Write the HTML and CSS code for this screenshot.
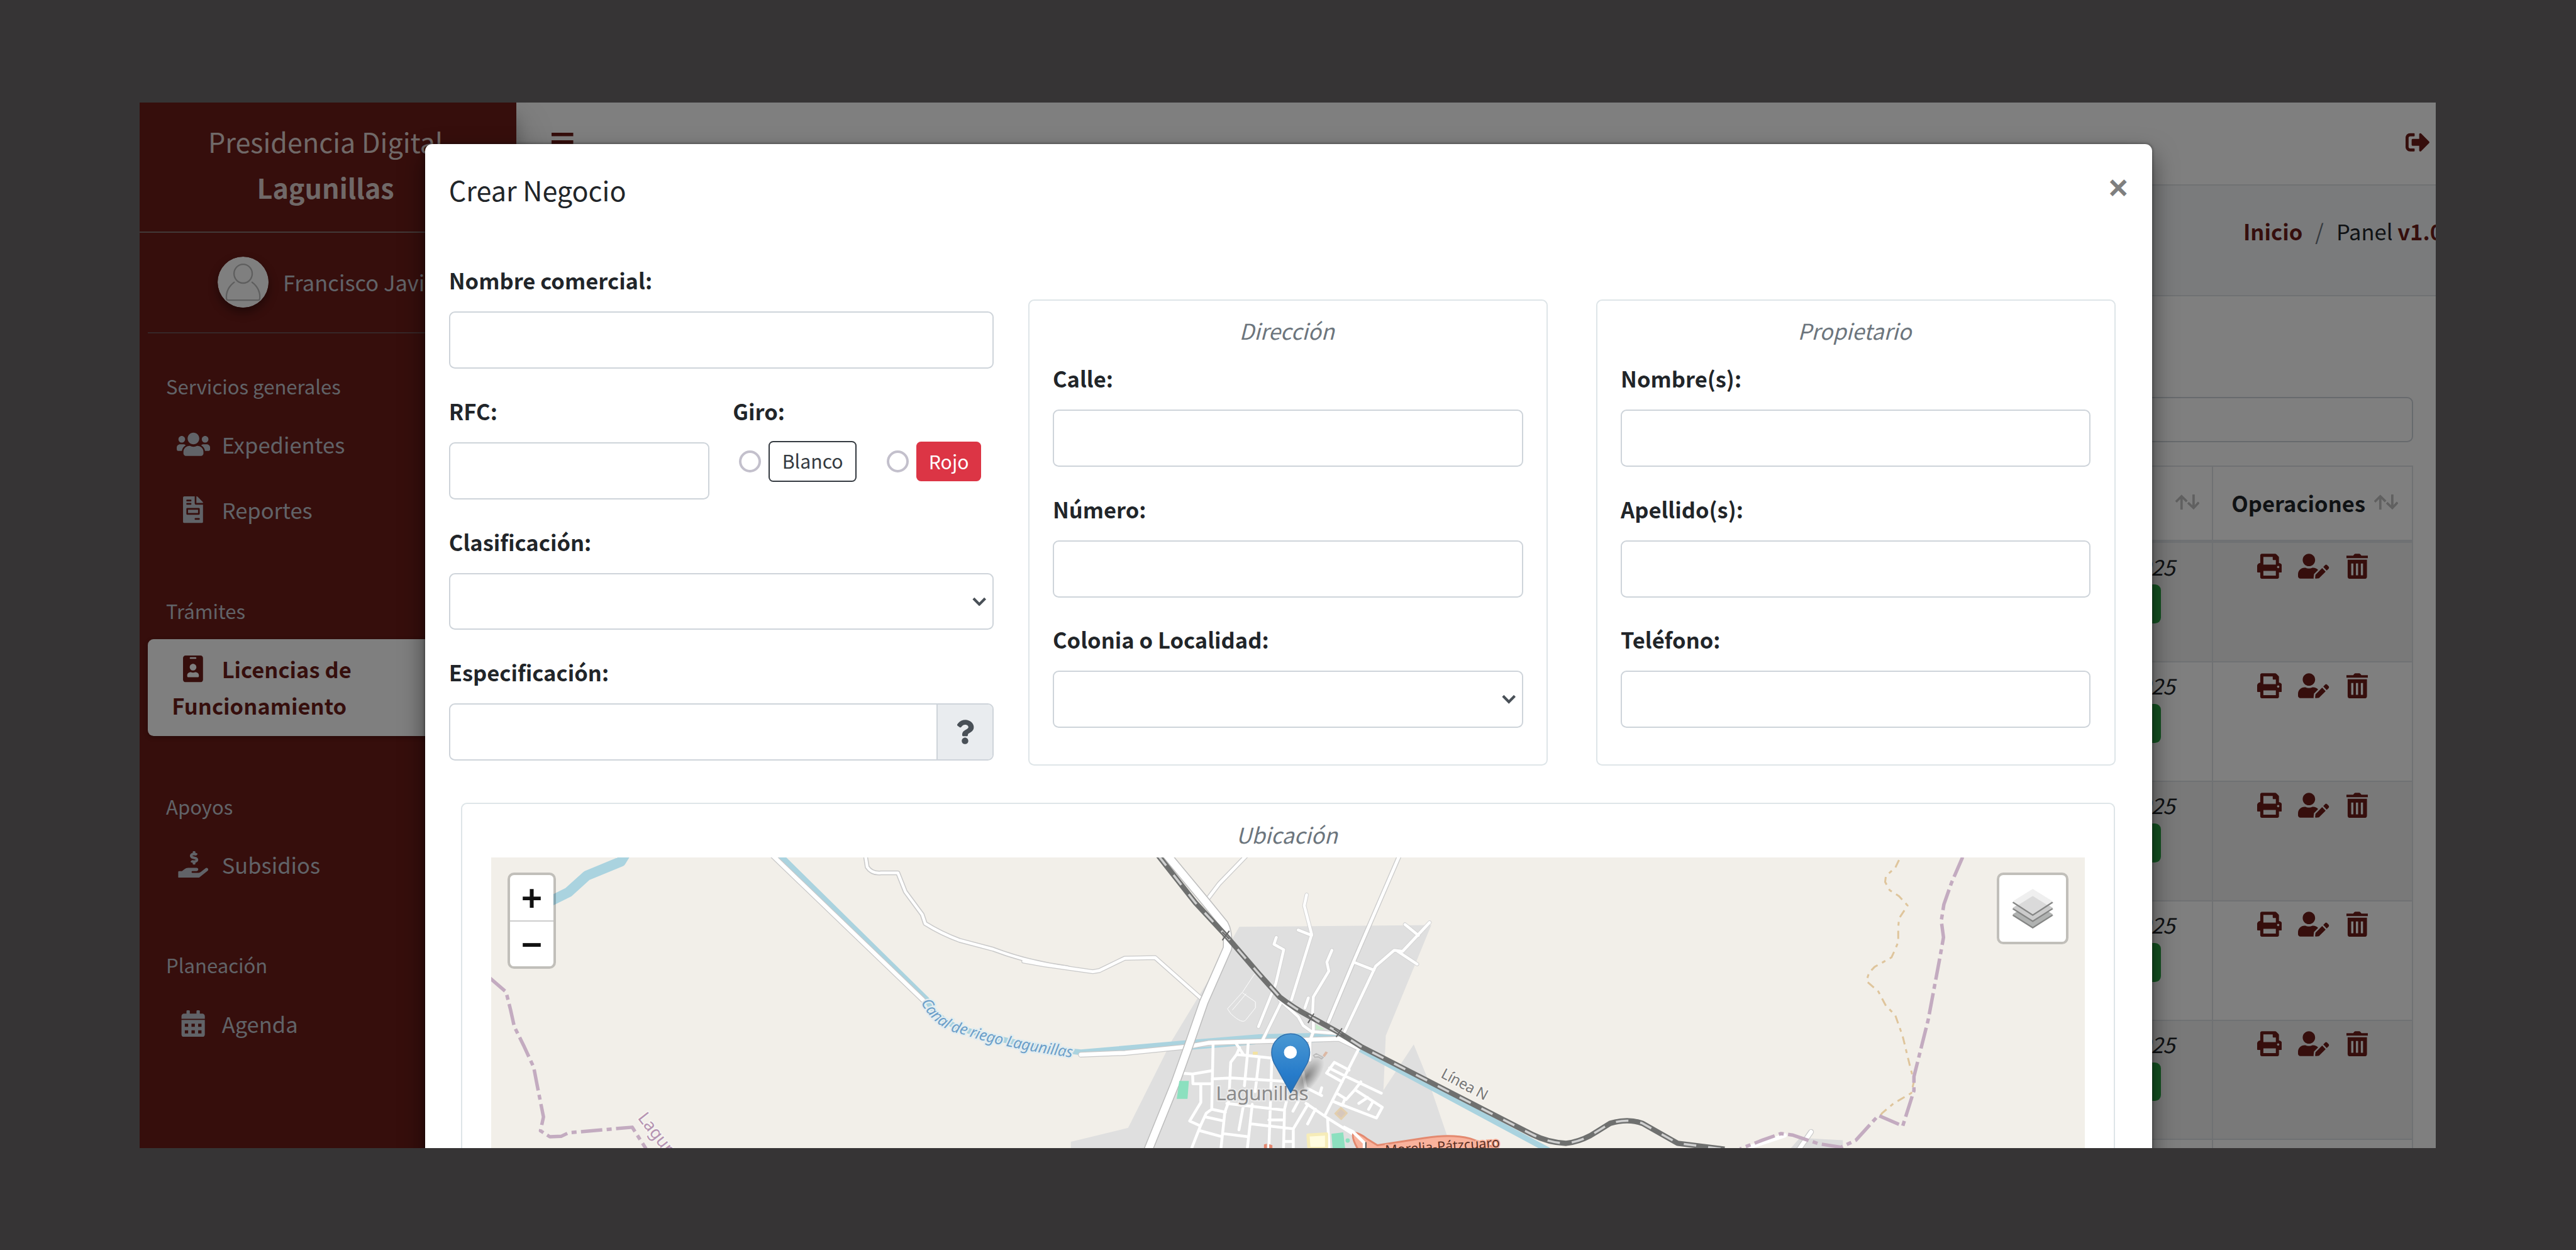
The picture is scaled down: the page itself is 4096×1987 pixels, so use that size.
FILE: index.html
```html
<!DOCTYPE html>
<html lang="es">
<head>
<meta charset="utf-8">
<title>Presidencia Digital Lagunillas</title>
<link rel="stylesheet" href="styles.css">
</head>
<body>
<svg class="sprite" aria-hidden="true">
  <symbol id="i-users" viewBox="0 0 640 512"><path d="M96 224c35.3 0 64-28.7 64-64s-28.7-64-64-64-64 28.7-64 64 28.7 64 64 64zm448 0c35.3 0 64-28.7 64-64s-28.7-64-64-64-64 28.7-64 64 28.7 64 64 64zm32 32h-64c-17.6 0-33.5 7.1-45.1 18.6 40.3 22.1 68.9 62 75.1 109.4h66c17.7 0 32-14.3 32-32v-32c0-35.3-28.7-64-64-64zm-256 0c61.9 0 112-50.1 112-112S381.9 32 320 32 208 82.1 208 144s50.1 112 112 112zm76.8 32h-8.3c-20.8 10-43.9 16-68.5 16s-47.6-6-68.5-16h-8.3C179.6 288 128 339.6 128 403.2V432c0 26.5 21.5 48 48 48h288c26.5 0 48-21.5 48-48v-28.8c0-63.6-51.6-115.2-115.2-115.2zm-223.7-13.4C161.5 263.1 145.6 256 128 256H64c-35.3 0-64 28.7-64 64v32c0 17.7 14.3 32 32 32h65.9c6.3-47.4 34.9-87.3 75.2-109.4z"/></symbol>
  <symbol id="i-invoice" viewBox="0 0 384 512"><path d="M288 256H96v64h192v-64zm89-151L279.1 7c-4.5-4.5-10.6-7-17-7H256v128h128v-6.1c0-6.3-2.5-12.4-7-16.9zm-153 31V0H24C10.7 0 0 10.7 0 24v464c0 13.3 10.7 24 24 24h336c13.3 0 24-10.7 24-24V160H248c-13.2 0-24-10.8-24-24zM64 72c0-4.42 3.58-8 8-8h80c4.42 0 8 3.58 8 8v16c0 4.42-3.58 8-8 8H72c-4.42 0-8-3.58-8-8V72zm0 64c0-4.42 3.58-8 8-8h80c4.42 0 8 3.58 8 8v16c0 4.42-3.58 8-8 8H72c-4.42 0-8-3.58-8-8v-16zm256 304c0 4.42-3.58 8-8 8h-80c-4.42 0-8-3.58-8-8v-16c0-4.42 3.58-8 8-8h80c4.42 0 8 3.58 8 8v16zm0-200v96c0 8.84-7.16 16-16 16H80c-8.84 0-16-7.16-16-16v-96c0-8.84 7.16-16 16-16h224c8.84 0 16 7.16 16 16z"/></symbol>
  <symbol id="i-badge" viewBox="0 0 384 512"><path d="M336 0H48C21.5 0 0 21.5 0 48v416c0 26.5 21.5 48 48 48h288c26.5 0 48-21.5 48-48V48c0-26.5-21.5-48-48-48zM144 32h96c8.8 0 16 7.2 16 16s-7.2 16-16 16h-96c-8.8 0-16-7.2-16-16s7.2-16 16-16zm48 128c35.3 0 64 28.7 64 64s-28.7 64-64 64-64-28.7-64-64 28.7-64 64-64zm112 236.8c0 10.6-10 19.2-22.4 19.2H102.4C90 416 80 407.4 80 396.8v-19.2c0-31.8 30.1-57.6 67.2-57.6h5c12.3 5.1 25.7 8 39.8 8s27.6-2.9 39.8-8h5c37.1 0 67.2 25.8 67.2 57.6v19.2z"/></symbol>
  <symbol id="i-hand" viewBox="0 0 576 512"><path d="M271.06,144.3l54.27,14.3a8.59,8.59,0,0,1,6.63,8.1c0,4.6-4.09,8.4-9.12,8.4h-35.6a30,30,0,0,1-11.19-2.2c-5.24-2.2-11.28-1.7-15.3,2l-19,17.5a11.68,11.68,0,0,0-2.25,2.66,11.42,11.42,0,0,0,3.88,15.74,83.77,83.77,0,0,0,34.51,11.5V240c0,8.8,7.83,16,17.37,16h17.37c9.55,0,17.38-7.2,17.38-16V222.4c32.93-3.6,57.84-31,53.5-63-3.15-23-22.46-41.3-46.56-47.7L282.68,97.4a8.59,8.59,0,0,1-6.63-8.1c0-4.6,4.09-8.4,9.12-8.4h35.6A30,30,0,0,1,332,83.1c5.23,2.2,11.28,1.7,15.3-2l19-17.5A11.31,11.31,0,0,0,368.47,61a11.43,11.43,0,0,0-3.84-15.78,83.82,83.82,0,0,0-34.52-11.5V16c0-8.8-7.82-16-17.37-16H295.37C285.82,0,278,7.2,278,16V33.6c-32.89,3.6-57.85,31-53.51,63C227.63,119.6,247,137.9,271.06,144.3ZM565.27,328.1c-11.8-10.7-30.2-10-42.6,0L430.27,402a63.64,63.64,0,0,1-40,14H272a16,16,0,0,1,0-32h78.29c15.9,0,30.71-10.9,33.25-26.6a31.2,31.2,0,0,0,.46-5.46A32,32,0,0,0,352,320H192a117.66,117.66,0,0,0-74.1,26.29L71.4,384H16A16,16,0,0,0,0,400v96a16,16,0,0,0,16,16H372.77a64,64,0,0,0,40-14L564,377a32,32,0,0,0,1.28-48.9Z"/></symbol>
  <symbol id="i-calendar" viewBox="0 0 448 512"><path fill-rule="evenodd" d="M0 184h448v280c0 26.500-21.500 48-48 48H48c-26.500 0-48-21.500-48-48zM64 256h64v60H64zM192 256h64v60h-64zM320 256h64v60h-64zM64 384h64v60H64zM192 384h64v60h-64zM320 384h64v60h-64z"/><path d="M400 64h-48V16c0-8.800-7.200-16-16-16h-32c-8.800 0-16 7.200-16 16v48H160V16c0-8.800-7.200-16-16-16h-32c-8.800 0-16 7.200-16 16v48H48C21.500 64 0 85.500 0 112v50h448v-50c0-26.500-21.500-48-48-48z"/></symbol>
  <symbol id="i-signout" viewBox="0 0 512 512"><path d="M497 273L329 441c-15 15-41 4.500-41-17v-96H152c-13.300 0-24-10.700-24-24v-96c0-13.300 10.700-24 24-24h136V88c0-21.400 25.900-32 41-17l168 168c9.300 9.400 9.300 24.600 0 34zM192 436v-40c0-6.600-5.400-12-12-12H96c-17.700 0-32-14.300-32-32V160c0-17.700 14.300-32 32-32h84c6.600 0 12-5.400 12-12V76c0-6.600-5.400-12-12-12H96c-53 0-96 43-96 96v192c0 53 43 96 96 96h84c6.600 0 12-5.400 12-12z"/></symbol>
  <symbol id="i-print" viewBox="0 0 512 512"><path d="M448 192V77.250c0-8.490-3.370-16.620-9.370-22.630L393.370 9.370c-6-6-14.140-9.370-22.630-9.370H96C78.330 0 64 14.330 64 32v160c-35.350 0-64 28.650-64 64v112c0 8.840 7.160 16 16 16h48v96c0 17.670 14.330 32 32 32h320c17.670 0 32-14.330 32-32v-96h48c8.840 0 16-7.160 16-16V256c0-35.350-28.650-64-64-64zm-64 256H128v-96h256v96zm0-224H128V64h192v48c0 8.840 7.160 16 16 16h48v96zm48 72c-13.250 0-24-10.750-24-24 0-13.260 10.750-24 24-24s24 10.740 24 24c0 13.250-10.750 24-24 24z"/></symbol>
  <symbol id="i-useredit" viewBox="0 0 640 512"><path d="M224 256c70.700 0 128-57.300 128-128S294.700 0 224 0 96 57.300 96 128s57.300 128 128 128zm89.600 32h-16.700c-22.200 10.200-46.900 16-72.900 16s-50.600-5.800-72.900-16h-16.700C60.200 288 0 348.200 0 422.400V464c0 26.500 21.500 48 48 48h274.900c-2.400-6.800-3.400-14-2.600-21.300l6.800-60.900 1.200-11.100 7.900-7.900 77.300-77.300c-24.500-27.700-60-45.500-99.900-45.500zm45.300 145.300l-6.800 61c-1.100 10.200 7.500 18.800 17.600 17.600l60.900-6.800 137.900-137.900-71.700-71.700-137.900 137.800zM633 268.900L595.100 231c-9.300-9.300-24.500-9.300-33.800 0l-37.800 37.800-4.100 4.100 71.800 71.700 41.800-41.800c9.300-9.400 9.300-24.500 0-33.900z"/></symbol>
  <symbol id="i-trash" viewBox="0 0 110 128"><path fill-rule="evenodd" d="M0 10H34L40 3Q42 1 45 1H65Q68 1 70 3L76 10H110V23H0ZM6 31H104V117Q104 128 93 128H17Q6 128 6 117ZM24 50V110H35V50ZM48 50V110H59V50ZM73 50V110H84V50Z"/></symbol>
  <symbol id="i-question" viewBox="0 0 384 512"><path d="M202.021 0C122.202 0 70.503 32.703 29.914 91.026c-7.363 10.580-5.093 25.086 5.178 32.874l43.138 32.709c10.373 7.865 25.132 6.026 33.253-4.148 25.049-31.381 43.630-49.449 82.757-49.449 30.764 0 68.816 19.799 68.816 49.631 0 22.552-18.617 34.134-48.993 51.164-35.423 19.860-82.299 44.576-82.299 106.405V320c0 13.255 10.745 24 24 24h72.471c13.255 0 24-10.745 24-24v-5.773c0-42.860 125.268-44.645 125.268-160.627C377.504 66.256 286.902 0 202.021 0zM192 373.459c-38.196 0-69.271 31.075-69.271 69.271 0 38.195 31.075 69.270 69.271 69.270s69.271-31.075 69.271-69.271-31.075-69.270-69.271-69.270z"/></symbol>
  <symbol id="i-sort" viewBox="0 0 41 26"><path fill="none" stroke="currentColor" stroke-width="4" d="M10.500 26V3M1 12.500L10.500 3L19.500 12M31 0V23M21.500 14L31 23L40 13.500"/></symbol>
  <symbol id="i-chevron" viewBox="0 0 24 16"><path fill="none" stroke="currentColor" stroke-width="4.500" d="M2 2.500L12 12.500L22 2.500"/></symbol>
</svg>

<div class="screen">
  <div class="app">
    <aside class="sidebar">
      <div class="brand"><div>Presidencia Digital</div><strong>Lagunillas</strong></div>
      <div class="user">
        <svg class="avatar" viewBox="0 0 87 87"><circle cx="43.500" cy="43.500" r="43.500" fill="#fff"/><g fill="none" stroke="#bdbdbd" stroke-width="2.500"><ellipse cx="43.500" cy="29" rx="15.500" ry="16"/><path d="M29 43Q14 54 15 71Q15 74 18 74H69Q72 74 72 71Q73 54 58 43"/></g></svg>
        <span>Francisco Javier</span>
      </div>
      <nav class="nav">
        <div class="nav-header first">Servicios generales</div>
        <a class="nav-item"><span class="ico"><svg class="w-users"><use href="#i-users"/></svg></span>Expedientes</a>
        <a class="nav-item spaced"><span class="ico"><svg class="w-file"><use href="#i-invoice"/></svg></span>Reportes</a>
        <div class="nav-header">Trámites</div>
        <a class="nav-item active"><span class="ico"><svg class="w-file"><use href="#i-badge"/></svg></span>Licencias de<br>Funcionamiento</a>
        <div class="nav-header">Apoyos</div>
        <a class="nav-item"><span class="ico"><svg class="w-hand"><use href="#i-hand"/></svg></span>Subsidios</a>
        <div class="nav-header">Planeación</div>
        <a class="nav-item"><span class="ico"><svg class="w-cal"><use href="#i-calendar"/></svg></span>Agenda</a>
      </nav>
    </aside>
    <main class="main">
      <header class="topbar">
        <svg class="bars" viewBox="0 0 37 32"><path d="M0 0H37V6H0ZM0 13H37V19H0ZM0 26H37V32H0Z"/></svg>
        <svg class="signout"><use href="#i-signout"/></svg>
      </header>
      <div class="crumbs"><b>Inicio</b><span class="slash">/</span><span>Panel <b>v1.0</b></span></div>
      <section class="content">
        <div class="search"></div>
        <div class="table">
          <div class="tr th">
            <div class="td wide"><svg class="sort"><use href="#i-sort"/></svg></div>
            <div class="td ops"><span>Operaciones</span><svg class="sort"><use href="#i-sort"/></svg></div>
          </div>
          <div class="tr odd"><div class="td wide"><i>2025</i><span class="pill"></span></div><div class="td ops"><svg class="op"><use href="#i-print"/></svg><svg class="op edit"><use href="#i-useredit"/></svg><svg class="op trash"><use href="#i-trash"/></svg></div></div>
          <div class="tr"><div class="td wide"><i>2025</i><span class="pill"></span></div><div class="td ops"><svg class="op"><use href="#i-print"/></svg><svg class="op edit"><use href="#i-useredit"/></svg><svg class="op trash"><use href="#i-trash"/></svg></div></div>
          <div class="tr odd"><div class="td wide"><i>2025</i><span class="pill"></span></div><div class="td ops"><svg class="op"><use href="#i-print"/></svg><svg class="op edit"><use href="#i-useredit"/></svg><svg class="op trash"><use href="#i-trash"/></svg></div></div>
          <div class="tr"><div class="td wide"><i>2025</i><span class="pill"></span></div><div class="td ops"><svg class="op"><use href="#i-print"/></svg><svg class="op edit"><use href="#i-useredit"/></svg><svg class="op trash"><use href="#i-trash"/></svg></div></div>
          <div class="tr odd"><div class="td wide"><i>2025</i><span class="pill"></span></div><div class="td ops"><svg class="op"><use href="#i-print"/></svg><svg class="op edit"><use href="#i-useredit"/></svg><svg class="op trash"><use href="#i-trash"/></svg></div></div>
          <div class="tr"><div class="td wide"></div><div class="td ops"></div></div>
        </div>
      </section>
    </main>
  </div>
  <div class="backdrop"></div>

  <div class="modal">
    <div class="modal-head"><h5>Crear Negocio</h5><span class="close">×</span></div>
    <div class="form">
      <div class="col">
        <label>Nombre comercial:</label><div class="input"></div>
        <div class="pair">
          <div class="rfc"><label>RFC:</label><div class="input"></div></div>
          <div class="giro"><label>Giro:</label>
            <div class="radios"><span class="radio"></span><span class="btn white">Blanco</span><span class="radio second"></span><span class="btn red">Rojo</span></div>
          </div>
        </div>
        <label>Clasificación:</label><div class="input select"><svg><use href="#i-chevron"/></svg></div>
        <label>Especificación:</label><div class="input group"><span class="addon"><svg><use href="#i-question"/></svg></span></div>
      </div>
      <fieldset class="card">
        <div class="card-title">Dirección</div>
        <label>Calle:</label><div class="input"></div>
        <label>Número:</label><div class="input"></div>
        <label>Colonia o Localidad:</label><div class="input select"><svg><use href="#i-chevron"/></svg></div>
      </fieldset>
      <fieldset class="card owner">
        <div class="card-title">Propietario</div>
        <label>Nombre(s):</label><div class="input"></div>
        <label>Apellido(s):</label><div class="input"></div>
        <label>Teléfono:</label><div class="input"></div>
      </fieldset>
    </div>
    <div class="card place">
      <div class="card-title">Ubicación</div>
      <div class="map">
        <svg class="tiles" viewBox="838 1461 2716 496" preserveAspectRatio="none">
          <defs>
            <linearGradient id="pin" x1="0" y1="0" x2="0" y2="1"><stop offset="0" stop-color="#4a98d3"/><stop offset=".7" stop-color="#267bca"/><stop offset="1" stop-color="#2671b8"/></linearGradient>
            <radialGradient id="shade"><stop offset="0" stop-color="#000" stop-opacity=".42"/><stop offset="1" stop-color="#000" stop-opacity="0"/></radialGradient>
            <path id="canal-label" d="M1570 1708C1588 1740 1610 1756 1640 1762C1700 1782 1770 1794 1850 1805"/>
          </defs>
          <rect x="838" y="1461" width="2716" height="496" fill="#f2efe9"/>
          <!-- built-up area -->
          <g transform="translate(1780 1440) scale(.57398 .33801)">
            <path fill="#dfdfdf" d="M580 412L1150 403L1100 610L1015 960L1008 1235L1098 1005L1140 1180L1210 1530H80V1495L250 1425L380 985L505 635Z"/>
          </g>
          <g transform="translate(2660 1340) scale(.63776 .40179)"><path fill="#dcdcdc" d="M640 1490L755 1500V1545H610Z"/></g>
          <!-- water -->
          <g class="water">
            <path class="w16" d="M1067 1455L1059 1468L1001 1492L970 1520L930 1540"/>
            <path class="w8" d="M1331 1458L1580 1703Q1600 1742 1650 1756Q1740 1782 1843 1793L2027 1777L2147 1767L2280 1764"/>
            <path class="w8" d="M2316 1786L2640 1960"/>
            <path class="w3" d="M2030 1787L2140 1778M2220 1776L2290 1771"/>
          </g>
          <!-- minor roads -->
          <g id="roads">
            <g class="casing">
              <path class="c8" d="M1318 1458L1574 1704M1843 1797L1918 1794L2027 1783L2060 1777L2283 1770L2316 1786"/>
              <g transform="translate(820 1440) scale(.63776 .33801)"><path class="c7" d="M1028 50L1033 110Q1045 145 1070 140H1115L1135 235L1180 350L1188 395Q1230 445 1280 480L1370 525Q1460 590 1568 618"/></g>
              <g transform="translate(1780 1440) scale(.57398 .33801)">
                <path class="c7" d="M-60 585L0 603L145 638L165 632L240 570L330 567L475 785M600 55L520 195L480 285M1055 55L920 585L845 890"/>
                <path class="c6" d="M780 250L773 305L795 450L735 780M755 428L795 455M690 465L683 500L712 527L688 700L637 915M705 790L650 980M855 530L840 590L846 635L800 765L797 870M785 770L775 820M920 590L980 630M1145 390L1065 535L1040 530L985 610L893 940M1072 400L1112 455M1050 535L1108 600M700 780L755 865L770 910L795 940L880 950M800 860V940L790 985V1085"/>
              </g>
            </g>
            <g class="fill">
              <path class="f6" d="M1318 1458L1574 1704M1843 1797L1918 1794L2027 1783L2060 1777L2283 1770L2316 1786"/>
              <g transform="translate(820 1440) scale(.63776 .33801)"><path class="f4" d="M1028 50L1033 110Q1045 145 1070 140H1115L1135 235L1180 350L1188 395Q1230 445 1280 480L1370 525Q1460 590 1568 618"/></g>
              <g transform="translate(1780 1440) scale(.57398 .33801)">
                <path class="f5" d="M-60 585L0 603L145 638L165 632L240 570L330 567L475 785M600 55L520 195L480 285M1055 55L920 585L845 890"/>
                <path class="f4" d="M780 250L773 305L795 450L735 780M755 428L795 455M690 465L683 500L712 527L688 700L637 915M705 790L650 980M855 530L840 590L846 635L800 765L797 870M785 770L775 820M920 590L980 630M1145 390L1065 535L1040 530L985 610L893 940M1072 400L1112 455M1050 535L1108 600M700 780L755 865L770 910L795 940L880 950M800 860V940L790 985V1085"/>
                <path class="f1" d="M625 650L590 740L545 825L555 850Q590 905 600 880L628 820V790L590 745M600 750L560 830"/>
              </g>
              <g transform="translate(1960 1660) scale(.33333)">
                <path class="f4" d="M1070 380L900 715M325 350L318 690M155 505L220 510L318 493M220 510L222 560H318M262 565V655L205 750L260 775L290 710L318 690L388 705M440 350L480 410M460 375L445 410L415 450L405 650L385 705L365 890M505 345L500 415L485 570M445 410L500 415L640 430M560 430L540 600M625 430L620 600L610 890M320 535L420 530L700 548M395 660L690 695L685 890M480 670L457 795M525 665L500 890M520 765L735 790M735 890V790L810 665M290 730L380 750M260 775L215 890M260 800L370 830M380 815L500 830M610 745H685M690 855H735M690 690L700 650M760 650L733 700M800 660L910 735L1100 855L1105 890M848 690L808 765M910 735L918 890M800 580L880 620M880 580L870 615M1020 490L945 450L905 505L985 550M920 480L1000 520L1185 608M1080 550L1050 590L1190 680L1160 735L940 650M1050 590L1005 640M960 610L1000 635L985 670L940 650M1115 630L1070 660M1140 655L1120 690M785 500L800 590"/>
              </g>
            </g>
            <g transform="translate(2660 1340) scale(.63776 .40179)"><path class="casing c8" d="M670 1465L635 1545"/><path class="fill f6" d="M670 1465L635 1545M505 1530L600 1480"/></g>
          </g>
          <!-- main road -->
          <g transform="translate(1780 1440) scale(.57398 .33801)">
            <path class="casing c15" d="M365 50L480 285L535 400Q548 440 545 520L475 790L430 1010L390 1200L310 1535"/>
            <path class="fill f12" d="M365 50L480 285L535 400Q548 440 545 520L475 790L430 1010L390 1200L310 1535"/>
          </g>
          <!-- small areas -->
          <g transform="translate(1960 1660) scale(.33333)">
            <path fill="#8ce0bf" d="M152 545H201L194 637H139ZM930 815L990 808L1000 890H936Z"/><circle cx="1013" cy="850" r="11" fill="#8ce0bf"/>
            <path fill="#fffce0" stroke="#f6ecb8" stroke-width="5" d="M810 822L905 816V890H815Z"/>
            <path fill="#d7c7bb" stroke="#e3cfae" stroke-width="3" d="M978 683L1008 710L980 740L950 712Z"/>
            <path fill="#c8eccb" d="M850 256L897 282H850Z"/>
            <path fill="#f4e3a1" d="M528 396H553V411H528Z"/>
            <path fill="#dcb9a5" d="M885 415L900 394L912 400L895 424Z"/>
            <path fill="none" stroke="#bdbdbd" stroke-width="2" d="M838 415L852 406L888 425L880 432L862 422L845 424Z"/>
            <path fill="#e5876f" d="M585 890V870L600 866V890ZM612 890V868L628 874V890Z"/>
          </g>
          <g transform="translate(2240 1860) scale(.33333)">
            <path fill="#f9b29c" stroke="#e3896f" stroke-width="3" d="M205 208Q240 215 270 240L325 274L560 238Q700 215 800 240L945 292V310H235Q185 230 205 208Z"/>
            <path fill="none" stroke="#fff" stroke-width="5" d="M150 180L200 205L258 262V300"/><path stroke="#555" stroke-width="2" d="M266 258V300"/>
          </g>
          <!-- railway -->
          <path class="rail" d="M1975 1458L2038 1538L2090 1594L2147 1660L2182 1699Q2205 1717 2233 1732L2282 1759L2320 1783L2612 1933Q2640 1947 2670 1948Q2690 1946 2711 1935L2745 1914Q2775 1905 2800 1914L2860 1948L2940 1958"/>
          <path class="rail-dash" d="M1975 1458L2038 1538L2090 1594L2147 1660L2182 1699Q2205 1717 2233 1732L2282 1759L2320 1783L2612 1933Q2640 1947 2670 1948Q2690 1946 2711 1935L2745 1914Q2775 1905 2800 1914L2860 1948L2940 1958"/>
          <path class="cross" d="M2084 1588L2096 1600M2096 1586L2084 1602M2227 1729L2243 1741M2240 1727L2230 1743M2274 1753L2292 1766M2288 1752L2278 1767"/>
          <!-- boundaries -->
          <g transform="translate(820 1440) scale(.63776 .33801)"><path class="limit" d="M22 665L68 740L80 830L90 915L115 1010L142 1120L150 1200L168 1370L160 1440L185 1470L215 1468L235 1450L405 1422L442 1530"/></g>
          <g transform="translate(2660 1340) scale(.63776 .40179)">
            <path class="trail" d="M905 312L895 345L870 380L868 405L880 440L905 465L928 505L905 560L903 600V660L895 690L885 725L840 765L825 790L818 825L850 870L870 930L895 970L915 1060L935 1190L945 1250L938 1300L890 1345L860 1385L850 1410"/>
            <path class="limit" d="M1075 300L1045 410L1025 500L1018 570L1024 640L1015 720L983 990L945 1230V1290L915 1440L850 1395L790 1500L750 1530L690 1515L620 1478L590 1472L540 1500L480 1537"/>
          </g>
          <!-- labels -->
          <text class="t-canal"><textPath href="#canal-label" textLength="284">Canal de riego Lagunillas</textPath></text>
          <text class="t-limit" transform="translate(1087 1905) rotate(52)">Lagunillas</text>
          <text class="t-rail" transform="translate(2455 1835) rotate(28)" textLength="86">Línea N</text>
          <text class="t-road" transform="translate(2362 1968) rotate(-4)">Morelia-Pátzcuaro</text>
          <text class="t-town" x="2073" y="1875" textLength="158">Lagunillas</text>
          <!-- marker -->
          <ellipse cx="2228" cy="1834" rx="42" ry="19" transform="rotate(-52 2228 1834)" fill="url(#shade)"/>
          <path fill="url(#pin)" stroke="#2e6fae" stroke-width="1.500" d="M2200.500 1862L2172 1811Q2168 1802 2168 1793A32.500 31.500 0 0 1 2233 1793Q2233 1802 2229 1811Z"/>
          <circle cx="2200" cy="1793" r="11" fill="#fff"/>
        </svg>
        <div class="zoom"><span>+</span><span>−</span></div>
        <div class="layers"><svg viewBox="1209 440 108 165" preserveAspectRatio="none"><path fill="#b0b2b1" d="M1209 547L1263 494L1317 547L1263 605Z"/><path fill="none" stroke="#858685" stroke-width="5" d="M1210 550L1263 603L1316 550"/><path fill="#cbcbcb" d="M1209 520L1263 467L1317 520L1263 577Z"/><path fill="none" stroke="#858685" stroke-width="5" d="M1210 523L1263 576L1316 523"/><path fill="#efefef" d="M1209 493L1263 440L1317 493L1263 549Z"/><path fill="#dadada" d="M1263 470L1302 508L1263 547L1224 508Z"/><path fill="none" stroke="#858685" stroke-width="5" d="M1210 496L1263 550L1316 496"/></svg></div>
      </div>
    </div>
  </div>
</div>
</body>
</html>
```
FILE: styles.css
```css
* { box-sizing: border-box; }

html { font-size: 93.3035px; }

body {
  margin: 0;
  height: 100vh;
  overflow: hidden;
  background: #363435;
  font-family: "Noto Sans CJK SC", "Noto Sans", sans-serif;
  font-size: .37rem;
  line-height: .62rem;
  color: #212529;
}

.sprite { display: none; }
svg { display: block; fill: currentColor; }

.screen {
  position: relative;
  width: 39.125rem;
  height: 17.805rem;
  margin: 1.75rem 0 0 2.38rem;
  overflow: hidden;
  background: #fff;
}

.app { display: flex; height: 100%; }

/* sidebar */
.sidebar {
  flex: none;
  width: 6.415rem;
  background: #6c1c18;
  color: #c2c7d0;
  box-shadow: 0 .36rem .72rem rgba(0, 0, 0, .25), 0 .26rem .26rem rgba(0, 0, 0, .22);
  z-index: 1;
}

.brand {
  height: 2.215rem;
  padding: .26rem .08rem 0 0;
  border-bottom: .026rem solid #847370;
  text-align: center;
  font-size: .462rem;
  line-height: .79rem;
  color: #e0d2d1;
}

.user {
  display: flex;
  align-items: center;
  gap: .25rem;
  height: 1.72rem;
  margin: 0 .14rem;
  padding: 0 0 .01rem 1.184rem;
  border-bottom: .026rem solid #6f4f50;
  white-space: nowrap;
  overflow: hidden;
}

.avatar {
  flex: none;
  width: .87rem;
  height: .87rem;
  border-radius: 50%;
  box-shadow: 0 .08rem .16rem rgba(0, 0, 0, .4);
}

.nav { margin: 0 .14rem; }

.nav-header {
  display: flex;
  align-items: flex-end;
  height: 1.68rem;
  padding: 0 0 .23rem .31rem;
  font-size: .333rem;
  line-height: .5rem;
}

.nav-header.first { height: 1.375rem; }

.nav-item {
  display: block;
  min-height: 1.03rem;
  padding: .205rem 0 .205rem .41rem;
  border-radius: .1rem;
}

.nav-item.spaced { margin-top: .09rem; }

.nav-item.active {
  background: #fff;
  color: #6c1c18;
  font-weight: 700;
  box-shadow: 0 .03rem .08rem rgba(0, 0, 0, .24);
}

.ico {
  display: inline-block;
  width: .73rem;
  height: .455rem;
  margin-right: .12rem;
  vertical-align: -.07rem;
}

.ico svg { height: .455rem; margin: 0 auto; }
.w-users { width: .57rem; }
.w-file { width: .342rem; }
.w-hand { width: .52rem; }
.w-cal { width: .41rem; }

/* page behind the dialog */
.main { flex: 1; min-width: 0; }

.topbar {
  display: flex;
  justify-content: space-between;
  align-items: flex-start;
  height: 1.415rem;
  padding: .47rem .1rem 0 .605rem;
  border-bottom: .026rem solid #dee2e6;
  color: #6c1c18;
}

.bars { width: .37rem; height: .32rem; margin-top: .04rem; }
.signout { width: .413rem; height: .413rem; }

.crumbs {
  display: flex;
  align-items: center;
  height: 1.885rem;
  padding: 0 0 .3rem 29.435rem;
  background: #f4f6f9;
  border-bottom: .026rem solid #dee2e6;
  white-space: nowrap;
}

.crumbs b { color: #6c1c18; }
.slash { margin: 0 .215rem; color: #6c757d; }

.content { padding: 1.71rem .385rem 0 .38rem; }

.search {
  height: .77rem;
  border: .026rem solid #ced4da;
  border-radius: .1rem;
}

.table {
  margin-top: .4rem;
  border: .03rem solid #dee2e6;
  border-bottom: 0;
}

.tr { display: flex; height: 2.035rem; border-bottom: .026rem solid #dee2e6; }
.tr.odd { background: #f2f2f2; }
.tr.th { height: 1.3rem; border-bottom: .055rem solid #dee2e6; font-weight: 700; }

.td.wide {
  display: flex;
  flex-direction: column;
  align-items: flex-end;
  flex: 1;
  padding: .09rem .63rem 0 0;
  border-right: .026rem solid #dee2e6;
}

.pill {
  width: 1.6rem;
  height: .66rem;
  margin: 0 .24rem 0 0;
  border-radius: .1rem;
  background: #28a745;
}

.td.ops {
  display: flex;
  width: 3.38rem;
  padding: .18rem 0 0 .745rem;
  color: #6c1c18;
}

.th .td.wide { padding: .47rem .22rem 0 0; }
.th .td.ops { padding: .31rem .23rem 0 .31rem; color: #212529; justify-content: space-between; }
.sort { width: .41rem; height: .26rem; color: #c0c0c0; }
.ops .sort { margin-top: .16rem; }

.op { width: .425rem; height: .43rem; }
.op.edit { width: .53rem; margin-left: .275rem; }
.op.trash { width: .37rem; margin-left: .29rem; }

.backdrop { position: absolute; inset: 0; z-index: 2; background: rgba(0, 0, 0, .5); }

/* dialog */
.modal {
  position: absolute;
  z-index: 3;
  left: 4.865rem;
  top: .7rem;
  width: 29.43rem;
  height: 20rem;
  border-radius: .12rem;
  background: #fff;
  box-shadow: 0 .2rem .41rem rgba(0, 0, 0, .5), 0 0 .06rem rgba(0, 0, 0, .5);
}

.modal-head {
  display: flex;
  justify-content: space-between;
  height: 2.035rem;
  padding: .475rem .445rem 0 .405rem;
}

h5 { margin: 0; font-size: .462rem; font-weight: 400; }

.close {
  display: flex;
  justify-content: center;
  width: .26rem;
  height: .52rem;
  font-size: .38rem;
  font-weight: 700;
  line-height: .52rem;
  color: #7f7f7f;
  -webkit-text-stroke: .025rem #7f7f7f;
}

.form { display: flex; align-items: flex-start; height: 8.555rem; padding-left: .405rem; }
.col { width: 9.28rem; margin-right: .59rem; }

label {
  display: block;
  height: .56rem;
  margin-bottom: .265rem;
  line-height: .59rem;
  font-weight: 700;
}

.input {
  display: flex;
  justify-content: flex-end;
  align-items: center;
  height: .975rem;
  margin-bottom: .425rem;
  border: .026rem solid #ced4da;
  border-radius: .1rem;
}

.select { padding-right: .1rem; }
.select svg { width: .24rem; height: .16rem; color: #495057; }

.addon {
  display: flex;
  align-items: center;
  justify-content: center;
  width: .95rem;
  height: 100%;
  border-left: .026rem solid #ced4da;
  border-radius: 0 .08rem .08rem 0;
  background: #e9ecef;
}

.addon svg { width: .31rem; height: .42rem; color: #495057; }

.pair { display: flex; }
.rfc { width: 4.44rem; margin-right: .4rem; }
.radios { display: flex; align-items: center; height: .65rem; padding-left: .1rem; }
.radio { width: .38rem; height: .38rem; border: .045rem solid #c3c0cc; border-radius: 50%; }
.radio.second { margin-left: .51rem; }

.btn {
  height: .67rem;
  margin-left: .13rem;
  border-radius: .08rem;
  text-align: center;
  font-size: .324rem;
  line-height: .64rem;
}

.btn.white { width: 1.5rem; height: .7rem; border: .026rem solid #343a40; color: #343a40; }
.btn.red { width: 1.1rem; background: #dc3545; color: #fff; line-height: .67rem; }

.card {
  width: 8.86rem;
  height: 7.935rem;
  margin: .62rem 0 0;
  padding: .19rem .4rem 0;
  border: .026rem solid #dee5e8;
  border-radius: .1rem;
}

.card.owner { margin-left: .82rem; width: 8.85rem; }

.card-title {
  height: .62rem;
  margin-bottom: .22rem;
  text-align: center;
  text-indent: -.04rem;
  font-style: italic;
  line-height: .64rem;
  color: #6c757d;
}

.card.place {
  width: 28.18rem;
  height: 9rem;
  margin: .635rem 0 0 .615rem;
  padding: .2rem .485rem 0;
}

.place .card-title { margin-bottom: .09rem; }

/* map */
.map { position: relative; }
.tiles { width: 27.16rem; height: 4.96rem; }
.tiles path { vector-effect: non-scaling-stroke; stroke-linejoin: round; }

.water path, .casing, .casing path, .fill, .fill path { fill: none; stroke-linecap: round; }
.water { stroke: #aad3df; }
.casing { stroke: #c9c9c9; }
.fill { stroke: #fff; }
.w16 { stroke-width: 16px; }
.w8 { stroke-width: 9px; }
.w3 { stroke-width: 3px; }
.c15 { stroke-width: 15px; stroke: #bdbdbd; }
.c8 { stroke-width: 9px; }
.c7 { stroke-width: 7.5px; }
.c6 { stroke-width: 6.5px; stroke: #d3d3d3; }
.f12 { stroke-width: 12px; }
.f6 { stroke-width: 6.5px; }
.f5 { stroke-width: 5px; }
.f4 { stroke-width: 4.5px; }
.f1 { stroke-width: 1px; }

.rail { fill: none; stroke: #6f706f; stroke-width: 8.5px; }
.rail-dash { fill: none; stroke: #d0d0d0; stroke-width: 3.5px; stroke-dasharray: 20 19; }
.cross { stroke: #666; stroke-width: 2px; }
.limit { fill: none; stroke: #c3abc0; stroke-width: 5.5px; stroke-dasharray: 34 7 8 7; }
.trail { fill: none; stroke: #dfc59c; stroke-width: 3px; stroke-dasharray: 13 8 6 8; }

.tiles text { font-family: "Noto Sans", sans-serif; stroke: #f6f4f0; stroke-width: 4px; paint-order: stroke; }
.tiles .t-canal { font-size: 26px; font-style: italic; fill: #6c9fc9; stroke: #e3edf0; stroke-width: 5px; }
.tiles .t-limit { font-size: 29px; fill: #b593b1; }
.tiles .t-rail { font-size: 25px; fill: #777; }
.tiles .t-road { font-size: 23px; fill: #5a2e22; stroke: #f9b29c; }
.tiles .t-town { font-size: 34px; fill: #8b8b8b; stroke: #ececec; }

.zoom, .layers {
  position: absolute;
  top: .265rem;
  border: .052rem solid rgba(0, 0, 0, .2);
  border-radius: .11rem;
  background: #fff;
  background-clip: padding-box;
}

.zoom { left: .28rem; width: .83rem; height: 1.64rem; }

.zoom span {
  display: block;
  height: .765rem;
  text-align: center;
  font-size: .6rem;
  font-weight: 700;
  line-height: .72rem;
  color: #111;
}

.zoom span + span { border-top: .026rem solid #ccc; }

.layers {
  right: .28rem;
  display: flex;
  align-items: center;
  justify-content: center;
  width: 1.22rem;
  height: 1.22rem;
}

.layers svg { width: .69rem; height: .67rem; }
```
